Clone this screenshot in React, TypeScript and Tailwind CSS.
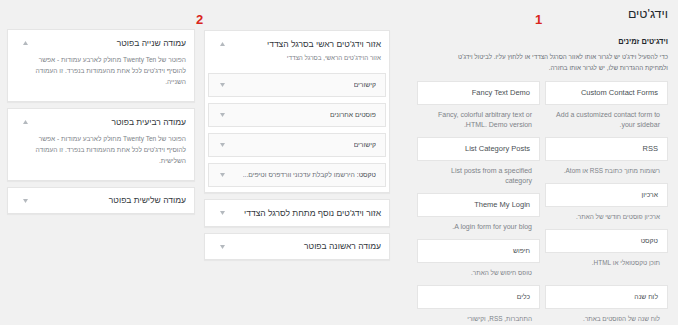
import { Fragment } from 'react'

type Widget = { name: string; desc: string[]; he?: boolean; descHe?: boolean }

const rightCol: Widget[] = [
  { name: 'Custom Contact Forms', desc: ['Add a customized contact form to', 'your sidebar.'] },
  { name: 'RSS', desc: ['רשומות מתוך כתובת RSS או Atom.'], descHe: true },
  { name: 'ארכיון', desc: ['ארכיון פוסטים חודשי של האתר.'], he: true, descHe: true },
  { name: 'טקסט', desc: ['תוכן טקסטואלי או HTML.'], he: true, descHe: true },
]

const leftCol: Widget[] = [
  { name: 'Fancy Text Demo', desc: ['Fancy, colorful arbitrary text or', 'HTML. Demo version.'] },
  { name: 'List Category Posts', desc: ['List posts from a specified', 'category'] },
  { name: 'Theme My Login', desc: ['A login form for your blog.'] },
  { name: 'חיפוש', desc: ['טופס חיפוש של האתר.'], he: true, descHe: true },
]

const lastRow: Widget[] = [
  { name: 'לוח שנה', desc: ['לוח שנה של הפוסטים באתר.'], he: true, descHe: true },
  { name: 'כלים', desc: ['התחברות, RSS, וקישורי'], he: true, descHe: true },
]

const footerText = ['הפוטר של Twenty Ten מחולק לארבע עמודות - אפשר', "להוסיף וידג'טים לכל אחת מהעמודות בנפרד. זו העמודה"]

function Arrow({ up }: { up?: boolean }) {
  return (
    <svg width="5" height="4" viewBox="0 0 5 4" className="shrink-0">
      <path d={up ? 'M0 4 L2.5 0 L5 4 Z' : 'M0 0 L2.5 4 L5 0 Z'} fill="#b4b9be" />
    </svg>
  )
}

function AvailableWidget({ w }: { w: Widget }) {
  return (
    <div className="mb-[7px]">
      <div
        className={`h-[24px] flex items-center px-[9px] bg-white border border-[#e5e5e5] text-[#4a4f54] ${
          w.he ? 'text-[6.8px]' : 'text-[7.5px]'
        }`}
      >
        {w.name}
      </div>
      <div
        className={`mt-[5px] pr-[8px] leading-[10px] text-[#7e8389] ${w.descHe ? 'text-[6.4px]' : 'text-[7px]'}`}
      >
        {w.desc.map((line, i) => (
          <Fragment key={i}>
            {i > 0 && <br />}
            {line}
          </Fragment>
        ))}
      </div>
    </div>
  )
}

function SidebarWidget({ children }: { children: React.ReactNode }) {
  return (
    <div className="h-[24px] mb-[6px] last:mb-[5px] flex items-center justify-between pr-[9px] pl-[11px] bg-[#fafafa] border border-[#e5e5e5] text-[6.8px] text-[#4a4f54]">
      <span className="truncate">{children}</span>
      <Arrow />
    </div>
  )
}

function ClosedBox({ title, h = 'h-[28px]', size = 'text-[8.5px]' }: { title: string; h?: string; size?: string }) {
  return (
    <div
      className={`${h} flex items-center justify-between pr-[8px] pl-[15px] bg-white border border-[#e5e5e5] shadow-[0_1px_1px_rgba(0,0,0,0.04)]`}
    >
      <span className={`${size} text-[#32373c]`}>{title}</span>
      <Arrow />
    </div>
  )
}

function FooterBox({ title, last }: { title: string; last: string }) {
  return (
    <div className="bg-white border border-[#e5e5e5] shadow-[0_1px_1px_rgba(0,0,0,0.04)] pr-[8px] pl-[15px] pt-[6px] pb-[14px]">
      <div className="flex items-center justify-between h-[14px]">
        <span className="text-[8.5px] text-[#32373c]">{title}</span>
        <Arrow up />
      </div>
      <div className="mt-[4px] -ml-[8px] text-[6.6px] leading-[11px] text-[#7e8389]">
        {footerText[0]}
        <br />
        {footerText[1]}
        <br />
        {last}
      </div>
    </div>
  )
}

export default function App() {
  return (
    <div
      dir="rtl"
      className="relative w-[678px] h-[325px] overflow-hidden bg-[#f1f1f1] flex items-start pr-[10px] pl-[7px] font-['Liberation_Sans',Arial,sans-serif]"
    >
      {/* Available widgets */}
      <div className="w-[251px] shrink-0">
        <h1 className="pt-[5px] text-[12.5px] leading-[18px] text-[#23282d]">וידג'טים</h1>
        <h2 className="mt-[14px] text-[7.5px] leading-[10px] font-bold text-[#23282d]">וידג'טים זמינים</h2>
        <p className="mt-[4px] text-[6.3px] leading-[11px] text-[#6a7077]">
          כדי להפעיל וידג'ט יש לגרור אותו לאזור הסרגל הצדדי או ללחוץ עליו. לביטול וידג'ט
          <br />
          ולמחיקת ההגדרות שלו, יש לגרור אותו בחזרה.
        </p>
        <div className="mt-[8px] flex gap-[5px] items-start">
          <div className="flex-1">
            {rightCol.map(w => (
              <AvailableWidget key={w.name} w={w} />
            ))}
          </div>
          <div className="flex-1">
            {leftCol.map(w => (
              <AvailableWidget key={w.name} w={w} />
            ))}
          </div>
        </div>
        <div className="flex gap-[5px]">
          {lastRow.map(w => (
            <div key={w.name} className="flex-1">
              <AvailableWidget w={w} />
            </div>
          ))}
        </div>
      </div>

      {/* Main sidebar areas */}
      <div className="w-[186px] shrink-0 mr-[27px] mt-[30px] flex flex-col gap-[6px]">
        <div className="bg-white border border-[#e5e5e5] shadow-[0_1px_1px_rgba(0,0,0,0.04)] px-[3px]">
          <div className="pr-[5px] pl-[12px] pt-[6px] flex items-center justify-between h-[20px]">
            <span className="text-[8.5px] text-[#32373c]">אזור וידג'טים ראשי בסרגל הצדדי</span>
            <Arrow up />
          </div>
          <div className="pr-[5px] mt-[2px] text-[6.3px] leading-[10px] text-[#7e8389]">
            אזור הוידג'טים הראשי, בסרגל הצדדי
          </div>
          <div className="mt-[10px]">
            <SidebarWidget>קישורים</SidebarWidget>
            <SidebarWidget>פוסטים אחרונים</SidebarWidget>
            <SidebarWidget>קישורים</SidebarWidget>
            <SidebarWidget>
              טקסט: <span className="text-[#6a7077]">הירשמו לקבלת עדכוני וורדפרס וטיפים...</span>
            </SidebarWidget>
          </div>
        </div>
        <ClosedBox title="אזור וידג'טים נוסף מתחת לסרגל הצדדי" />
        <ClosedBox title="עמודה ראשונה בפוטר" h="h-[27px]" />
      </div>

      {/* Footer areas */}
      <div className="w-[188px] shrink-0 mr-[9px] mt-[29px] flex flex-col gap-[6px]">
        <FooterBox title="עמודה שנייה בפוטר" last="השנייה." />
        <FooterBox title="עמודה רביעית בפוטר" last="השלישית." />
        <ClosedBox title="עמודה שלישית בפוטר" h="h-[27px]" />
      </div>

      {/* Annotation numbers */}
      <span className="absolute left-[535px] top-[13px] text-[13px] leading-[14px] font-bold text-[#d9261c]">1</span>
      <span className="absolute left-[196px] top-[13px] text-[13px] leading-[14px] font-bold text-[#d9261c]">2</span>
    </div>
  )
}
